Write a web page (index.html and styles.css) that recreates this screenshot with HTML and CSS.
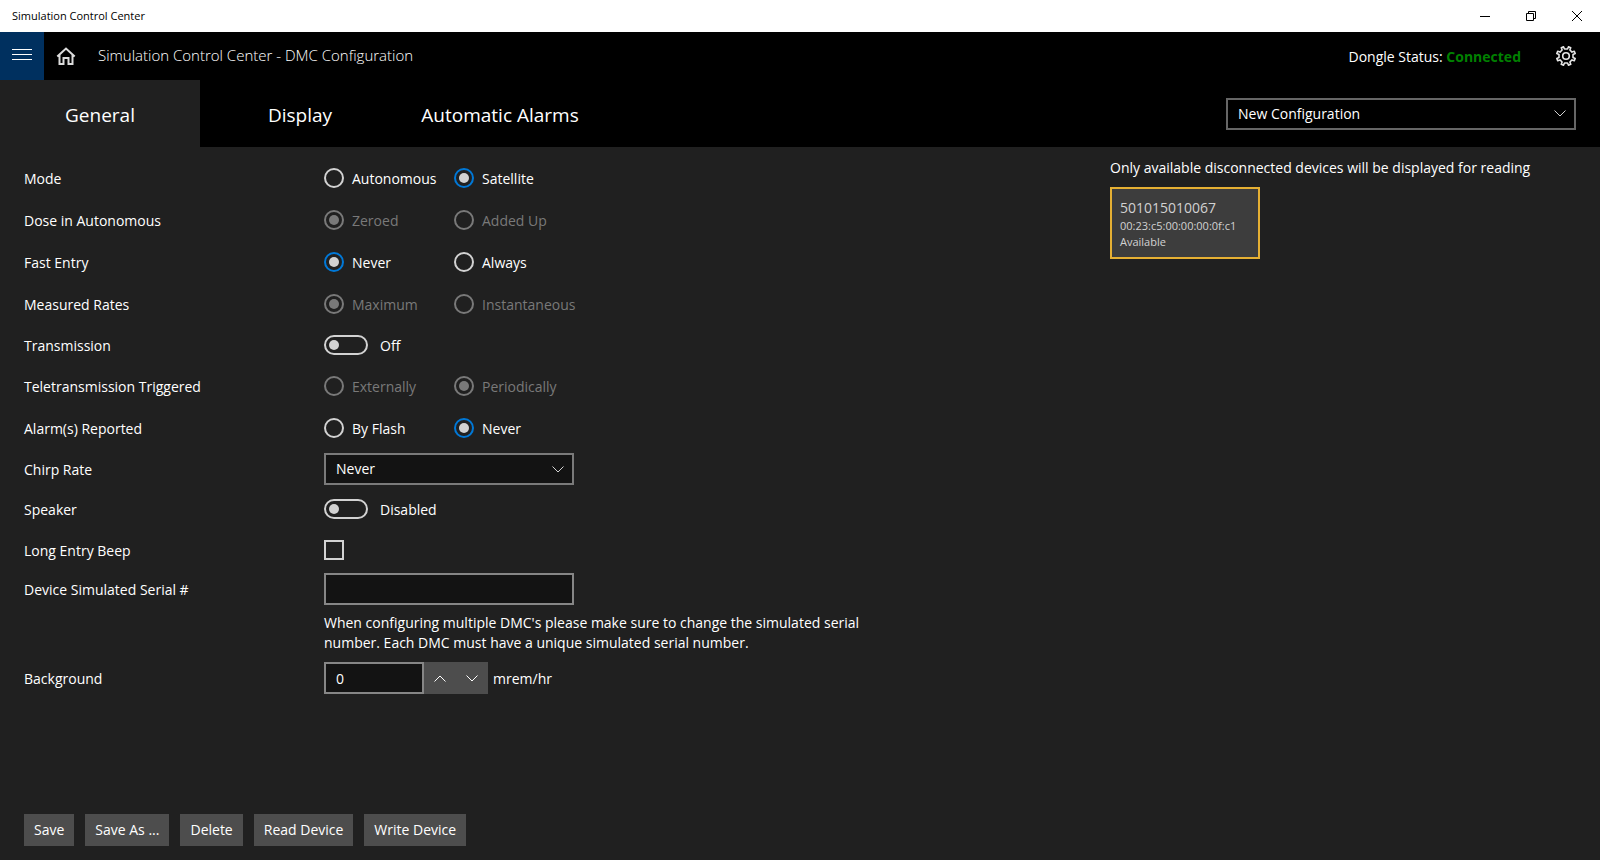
FILE: index.html
```html
<!DOCTYPE html>
<html lang="en">
  <head>
    <meta charset="UTF-8" />
    <meta name="viewport" content="width=device-width, initial-scale=1.0" />
    <title>Simulation Control Center</title>
    <link rel="stylesheet" href="styles.css">
  </head>
  <body>
    <div class="titlebar">
      <span class="titlebar-name">Simulation Control Center</span>
      <button class="window-btn" type="button" aria-label="Minimize">
        <svg width="10" height="10" viewBox="0 0 10 10"><path d="M0 5.5h10" /></svg>
      </button>
      <button class="window-btn" type="button" aria-label="Restore">
        <svg width="10" height="10" viewBox="0 0 10 10"><path d="M.5 2.5h7v7h-7zM2.5 2.5v-2h7v7h-2" /></svg>
      </button>
      <button class="window-btn" type="button" aria-label="Close">
        <svg width="10" height="10" viewBox="0 0 10 10"><path d="M0 0l10 10M10 0L0 10" /></svg>
      </button>
    </div>

    <header class="header">
      <button class="menu-btn" type="button" aria-label="Menu">
        <svg width="20" height="11" viewBox="0 0 20 11"><path d="M0 .5h20M0 5.5h20M0 10.5h20" /></svg>
      </button>
      <a class="home-link" href="#" aria-label="Home">
        <svg width="20" height="18" viewBox="0 0 20 18"><path d="M1.300 9.500L10 1.500l8.700 8M3.500 8v9h4v-6h5v6h4V8" /></svg>
      </a>
      <h1 class="header-title">Simulation Control Center - DMC Configuration</h1>
      <p class="dongle">Dongle Status: <strong>Connected</strong></p>
      <button class="settings-btn" type="button" aria-label="Settings">
        <svg width="20" height="20" viewBox="0 0 20 20">
          <path d="M7.500 .8l1 2.200h3l1-2.200 2.200.9-.8 2.300 2.100 2.100 2.300-.8.9 2.200-2.200 1v3l2.200 1-.9 2.200-2.300-.8-2.100 2.100.8 2.300-2.200.9-1-2.200h-3l-1 2.200-2.200-.9.8-2.300L4 13.900l-2.300.8-.9-2.200 2.200-1v-3l-2.200-1 .9-2.200 2.300.8 2.100-2.100-.8-2.300z" />
          <circle cx="10" cy="10" r="3.3" />
        </svg>
      </button>
    </header>

    <nav class="tabs">
      <a class="tab active" href="#general">General</a>
      <a class="tab" href="#display">Display</a>
      <a class="tab" href="#alarms">Automatic Alarms</a>
      <div class="select tabs-select">
        <select aria-label="Configuration">
          <option>New Configuration</option>
        </select>
        <svg width="12" height="7" viewBox="0 0 12 7"><path d="M.5 .5L6 6 11.5 .5" /></svg>
      </div>
    </nav>

    <main class="main">
      <form class="form" id="general">
        <div class="row" role="radiogroup" aria-labelledby="l-mode">
          <span id="l-mode" class="row-label">Mode</span>
          <label class="option"><input type="radio" name="mode" /><span class="text">Autonomous</span></label>
          <label class="option"><input type="radio" name="mode" checked /><span class="text">Satellite</span></label>
        </div>
        <div class="row" role="radiogroup" aria-labelledby="l-dose">
          <span id="l-dose" class="row-label">Dose in Autonomous</span>
          <label class="option disabled"><input type="radio" name="dose" checked disabled /><span class="text">Zeroed</span></label>
          <label class="option disabled"><input type="radio" name="dose" disabled /><span class="text">Added Up</span></label>
        </div>
        <div class="row" role="radiogroup" aria-labelledby="l-fast">
          <span id="l-fast" class="row-label">Fast Entry</span>
          <label class="option"><input type="radio" name="fast" checked /><span class="text">Never</span></label>
          <label class="option"><input type="radio" name="fast" /><span class="text">Always</span></label>
        </div>
        <div class="row" role="radiogroup" aria-labelledby="l-rates">
          <span id="l-rates" class="row-label">Measured Rates</span>
          <label class="option disabled"><input type="radio" name="rates" checked disabled /><span class="text">Maximum</span></label>
          <label class="option disabled"><input type="radio" name="rates" disabled /><span class="text">Instantaneous</span></label>
        </div>
        <div class="row row-md">
          <label class="row-label" for="transmission">Transmission</label>
          <input class="toggle" type="checkbox" role="switch" id="transmission" />
          <span class="text">Off</span>
        </div>
        <div class="row" role="radiogroup" aria-labelledby="l-tele">
          <span id="l-tele" class="row-label">Teletransmission Triggered</span>
          <label class="option disabled"><input type="radio" name="tele" disabled /><span class="text">Externally</span></label>
          <label class="option disabled"><input type="radio" name="tele" checked disabled /><span class="text">Periodically</span></label>
        </div>
        <div class="row" role="radiogroup" aria-labelledby="l-reported">
          <span id="l-reported" class="row-label">Alarm(s) Reported</span>
          <label class="option"><input type="radio" name="reported" /><span class="text">By Flash</span></label>
          <label class="option"><input type="radio" name="reported" checked /><span class="text">Never</span></label>
        </div>
        <div class="row row-md">
          <label class="row-label" for="chirp">Chirp Rate</label>
          <div class="select">
            <select id="chirp">
              <option>Never</option>
            </select>
            <svg width="12" height="7" viewBox="0 0 12 7"><path d="M.5 .5L6 6 11.5 .5" /></svg>
          </div>
        </div>
        <div class="row row-md">
          <label class="row-label" for="speaker">Speaker</label>
          <input class="toggle" type="checkbox" role="switch" id="speaker" />
          <span class="text">Disabled</span>
        </div>
        <div class="row">
          <label class="row-label" for="beep">Long Entry Beep</label>
          <input class="check" type="checkbox" id="beep" />
        </div>
        <div class="row row-sm">
          <label class="row-label" for="serial">Device Simulated Serial #</label>
          <input class="text-input" type="text" id="serial" />
        </div>
        <p class="note">When configuring multiple DMC's please make sure to change the simulated serial number. Each DMC must have a unique simulated serial number.</p>
        <div class="row row-sm">
          <label class="row-label" for="background">Background</label>
          <div class="spinner">
            <input class="text-input" type="text" id="background" value="0" />
            <button type="button" aria-label="Increase">
              <svg width="12" height="7" viewBox="0 0 12 7"><path d="M.5 6.5L6 1l5.5 5.5" /></svg>
            </button>
            <button type="button" aria-label="Decrease">
              <svg width="12" height="7" viewBox="0 0 12 7"><path d="M.5 .5L6 6 11.5 .5" /></svg>
            </button>
          </div>
          <span class="text unit">mrem/hr</span>
        </div>
      </form>

      <aside class="devices">
        <p class="devices-hint">Only available disconnected devices will be displayed for reading</p>
        <button class="device" type="button">
          <span class="device-serial">501015010067</span>
          <span>00:23:c5:00:00:00:0f:c1</span>
          <span>Available</span>
        </button>
      </aside>
    </main>

    <footer class="actions">
      <button type="button">Save</button>
      <button type="button">Save As ...</button>
      <button type="button">Delete</button>
      <button type="button">Read Device</button>
      <button type="button">Write Device</button>
    </footer>
  </body>
</html>
```
FILE: styles.css
```css
:root {
  --bg: #202020;
  --field: #131313;
  --border: #7a7a7a;
  --light: #d2d2d2;
  --muted: #797979;
  --accent: #0078d7;
  --button: #4d4d4d;
}

*,
*::before,
*::after {
  box-sizing: border-box;
}

body {
  margin: 0;
  min-height: 100vh;
  display: flex;
  flex-direction: column;
  background-color: var(--bg);
  color: white;
  font-family: "Open Sans", "Noto Sans", sans-serif;
  font-size: 14px;
  line-height: 20px;
}

button,
input,
select {
  margin: 0;
  padding: 0;
  border: 0;
  border-radius: 0;
  background: none;
  color: inherit;
  font: inherit;
}

p,
h1 {
  margin: 0;
}

a {
  color: inherit;
  text-decoration: none;
}

svg {
  display: block;
  fill: none;
  stroke: currentColor;
}

/* title bar */
.titlebar {
  display: flex;
  align-items: center;
  height: 32px;
  background-color: white;
  color: black;
  font-size: 11px;
}

.titlebar-name {
  flex: 1;
  padding-left: 12px;
}

.window-btn {
  display: grid;
  place-items: center;
  width: 46px;
  height: 32px;
}

/* header */
.header {
  display: flex;
  align-items: center;
  height: 48px;
  padding-right: 24px;
  background-color: black;
}

.menu-btn {
  display: grid;
  justify-items: center;
  align-content: start;
  width: 44px;
  height: 48px;
  padding-top: 17px;
  background-color: #00305f;
}

.home-link {
  padding: 0 12px;
  color: #dcdcdc;
}

.home-link svg {
  stroke-width: 2;
}

.header-title {
  flex: 1;
  padding: 0 0 2px 10px;
  font-size: 15px;
  font-weight: 300;
}

.dongle {
  padding-top: 2px;
}

.dongle strong {
  color: green;
}

.settings-btn {
  margin-left: 35px;
  color: #e6e6e6;
}

.settings-btn svg {
  stroke-width: 1.6;
  stroke-linejoin: round;
}

/* tabs */
.tabs {
  display: flex;
  align-items: center;
  padding-right: 24px;
  background-color: black;
}

.tab {
  width: 200px;
  padding: 23px 0 20px;
  font-size: 19px;
  line-height: 24px;
  text-align: center;
}

.tab.active {
  background-color: var(--bg);
}

.tabs-select {
  width: 350px;
  margin-left: auto;
}

/* fields */
.select {
  display: grid;
  grid-template-columns: 1fr 32px;
  align-items: center;
  color: white;
}

.select select {
  grid-area: 1 / 1 / 2 / 3;
  width: 100%;
  height: 32px;
  padding: 0 10px;
  border: 2px solid var(--border);
  background-color: var(--field);
  appearance: none;
}

.select svg {
  grid-area: 1 / 2;
  justify-self: center;
  color: var(--light);
  pointer-events: none;
}

.tabs-select select {
  border-color: #666666;
  background-color: black;
}

.text-input {
  width: 250px;
  height: 32px;
  padding: 0 10px;
  border: 2px solid #868686;
  background-color: var(--field);
}

input[type="radio"] {
  display: grid;
  place-items: center;
  width: 20px;
  height: 20px;
  border: 2px solid var(--light);
  border-radius: 50%;
  appearance: none;
}

input[type="radio"]:checked {
  border-color: var(--accent);
}

input[type="radio"]:checked::before {
  content: "";
  width: 10px;
  height: 10px;
  border-radius: 50%;
  background-color: var(--light);
}

input[type="radio"]:disabled {
  border-color: var(--muted);
}

input[type="radio"]:disabled::before {
  background-color: var(--muted);
}

.toggle {
  display: flex;
  align-items: center;
  width: 44px;
  height: 20px;
  margin-right: 12px;
  padding: 0 3px;
  border: 2px solid var(--light);
  border-radius: 10px;
  appearance: none;
}

.toggle::before {
  content: "";
  width: 10px;
  height: 10px;
  border-radius: 50%;
  background-color: var(--light);
}

.toggle:checked {
  justify-content: flex-end;
  border-color: var(--accent);
  background-color: var(--accent);
}

.check {
  width: 20px;
  height: 20px;
  border: 2px solid var(--light);
  appearance: none;
}

.check:checked {
  background-color: var(--accent);
}

/* form */
.main {
  flex: 1;
  display: flex;
  justify-content: space-between;
}

.form {
  padding: 10px 24px;
}

.row {
  display: flex;
  align-items: center;
  height: 42px;
}

.row-md {
  height: 40px;
}

.row-sm {
  height: 36px;
}

.row-label {
  width: 300px;
  padding-top: 2px;
}

.row .select {
  width: 250px;
}

.text {
  padding-top: 2px;
}

.option {
  display: flex;
  align-items: center;
  gap: 8px;
  width: 130px;
}

.disabled {
  color: var(--muted);
}

.note {
  max-width: 860px;
  padding: 6px 0 7px 300px;
}

.spinner {
  display: flex;
}

.spinner .text-input {
  width: 100px;
}

.spinner button {
  display: grid;
  place-items: center;
  width: 32px;
  height: 32px;
  background-color: var(--button);
}

.unit {
  padding-left: 5px;
}

/* devices */
.devices {
  width: 490px;
  padding: 11px 24px 0 0;
}

.device {
  display: flex;
  flex-direction: column;
  width: 150px;
  margin-top: 9px;
  padding: 9px 8px 7px;
  border: 2px solid #e6b033;
  background-color: #3d3d3d;
  color: var(--light);
  font-size: 11px;
  line-height: 16px;
  text-align: left;
}

.device-serial {
  font-size: 14px;
  line-height: 20px;
}

/* bottom buttons */
.actions {
  display: flex;
  gap: 11px;
  padding: 14px 24px;
}

.actions button {
  height: 32px;
  padding: 0 10px;
  background-color: var(--button);
}
```
